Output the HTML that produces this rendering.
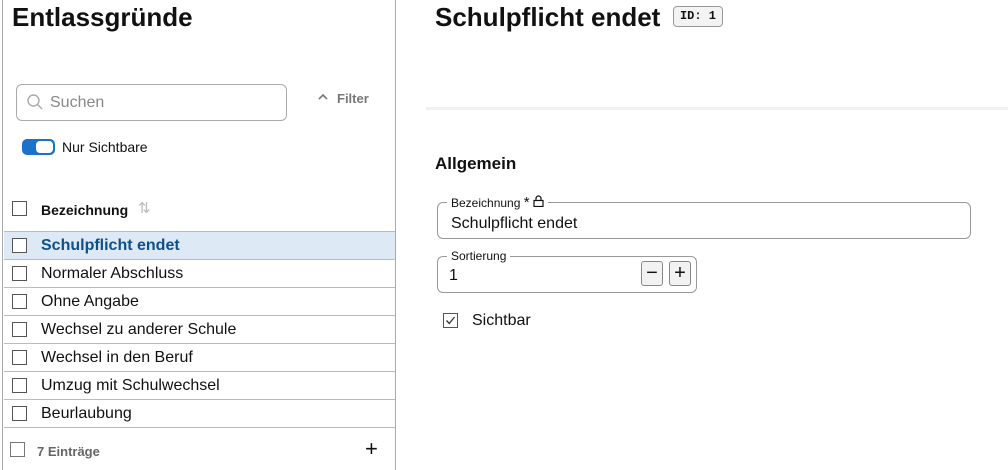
<!DOCTYPE html>
<html><head><meta charset="utf-8"><style>
*{box-sizing:border-box;margin:0;padding:0}
body{width:1008px;height:470px;overflow:hidden;background:#fff;font-family:"Liberation Sans",sans-serif;color:#111;position:relative}
.a{position:absolute}
.cb{position:absolute;width:15px;height:15px;border:1.5px solid #555;background:#fff}
.row{position:absolute;left:4px;width:391px;height:28px;border-bottom:1px solid #bbb}
.row .cb{left:8px;top:6px}
.row span{position:absolute;left:37px;top:5px;font-size:16px;white-space:nowrap}
</style></head><body>
<div class="a" style="left:2px;top:0;width:1px;height:470px;background:#aaa"></div>
<div class="a" style="left:395px;top:0;width:1px;height:470px;background:#aaa"></div>
<div class="a" style="left:12px;top:2px;font-size:26px;font-weight:bold">Entlassgründe</div>

<div class="a" style="left:16px;top:84px;width:271px;height:37px;border:1px solid #aaa;border-radius:6px"></div>
<svg class="a" style="left:26px;top:93px" width="18" height="18" viewBox="0 0 18 18"><circle cx="7.5" cy="7.5" r="5.5" fill="none" stroke="#aaa" stroke-width="1.4"/><line x1="11.5" y1="11.5" x2="16" y2="16" stroke="#aaa" stroke-width="1.4"/></svg>
<div class="a" style="left:50px;top:94px;font-size:16px;color:#888">Suchen</div>
<svg class="a" style="left:317px;top:93px" width="12" height="8" viewBox="0 0 12 8"><path d="M2 6 L6 2 L10 6" fill="none" stroke="#777" stroke-width="1.6"/></svg>
<div class="a" style="left:337px;top:91px;font-size:13px;font-weight:bold;color:#777">Filter</div>

<div class="a" style="left:22px;top:139px;width:33px;height:16px;border-radius:5px;background:#1a73c8"></div>
<div class="a" style="left:36px;top:141px;width:17px;height:12px;border-radius:4px;background:#fff"></div>
<div class="a" style="left:62px;top:139px;font-size:14px">Nur Sichtbare</div>

<div class="cb" style="left:12px;top:201px"></div>
<div class="a" style="left:41px;top:202px;font-size:14px;font-weight:bold">Bezeichnung</div>
<div class="a" style="left:138px;top:199px;font-size:15px;color:#bbb">⇅</div>
<div class="a" style="left:4px;top:231px;width:391px;height:1px;background:#bbb"></div>

<div class="row" style="top:232px;background:#dde9f5"><div class="cb"></div><span style="color:#0f4f8a;font-weight:bold">Schulpflicht endet</span></div>
<div class="row" style="top:260px"><div class="cb"></div><span>Normaler Abschluss</span></div>
<div class="row" style="top:288px"><div class="cb"></div><span>Ohne Angabe</span></div>
<div class="row" style="top:316px"><div class="cb"></div><span>Wechsel zu anderer Schule</span></div>
<div class="row" style="top:344px"><div class="cb"></div><span>Wechsel in den Beruf</span></div>
<div class="row" style="top:372px"><div class="cb"></div><span>Umzug mit Schulwechsel</span></div>
<div class="row" style="top:400px"><div class="cb"></div><span>Beurlaubung</span></div>

<div class="cb" style="left:10px;top:442px;border-color:#777"></div>
<div class="a" style="left:37px;top:444px;font-size:13px;font-weight:bold;color:#666">7 Einträge</div>
<div class="a" style="left:365px;top:436px;font-size:22px;color:#111">+</div>

<div class="a" style="left:435px;top:2px;font-size:26px;font-weight:bold">Schulpflicht endet</div>
<div class="a" style="left:673px;top:6px;width:50px;height:21px;border:1px solid #999;border-radius:4px;background:#f3f3f3;font-family:'Liberation Mono',monospace;font-size:12px;font-weight:bold;text-align:center;line-height:19px">ID: 1</div>
<div class="a" style="left:426px;top:107px;width:582px;height:3px;background:#f0f0f0"></div>

<div class="a" style="left:435px;top:154px;font-size:17px;font-weight:bold">Allgemein</div>

<div class="a" style="left:437px;top:202px;width:534px;height:37px;border:1px solid #999;border-radius:6px"></div>
<div class="a" style="left:447px;top:194px;background:#fff;padding:0 4px;font-size:12px">Bezeichnung <span style="font-size:15px">*</span> <svg width="11" height="12" viewBox="0 0 11 12"><rect x="1" y="5.5" width="9" height="6" fill="none" stroke="#111" stroke-width="1.2"/><path d="M3 5.5 V3.5 a2.5 2.5 0 0 1 5 0 V5.5" fill="none" stroke="#111" stroke-width="1.2"/></svg></div>
<div class="a" style="left:451px;top:215px;font-size:16px">Schulpflicht endet</div>

<div class="a" style="left:437px;top:256px;width:260px;height:37px;border:1px solid #999;border-radius:6px"></div>
<div class="a" style="left:447px;top:249px;background:#fff;padding:0 4px;font-size:12px">Sortierung</div>
<div class="a" style="left:449px;top:267px;font-size:16px">1</div>
<div class="a" style="left:641px;top:261px;width:22px;height:25px;border:1px solid #888;border-radius:3px;background:#f2f2f2;text-align:center;font-size:20px;line-height:22px">−</div>
<div class="a" style="left:669px;top:261px;width:22px;height:25px;border:1px solid #888;border-radius:3px;background:#f2f2f2;text-align:center;font-size:20px;line-height:22px">+</div>

<div class="a" style="left:443px;top:313px;width:15px;height:15px;border:1.5px solid #555"></div>
<svg class="a" style="left:445px;top:315px" width="11" height="11" viewBox="0 0 11 11"><path d="M1.5 5.5 L4.3 8.5 L9.5 2" fill="none" stroke="#333" stroke-width="1.3"/></svg>
<div class="a" style="left:472px;top:312px;font-size:16px">Sichtbar</div>
</body></html>
